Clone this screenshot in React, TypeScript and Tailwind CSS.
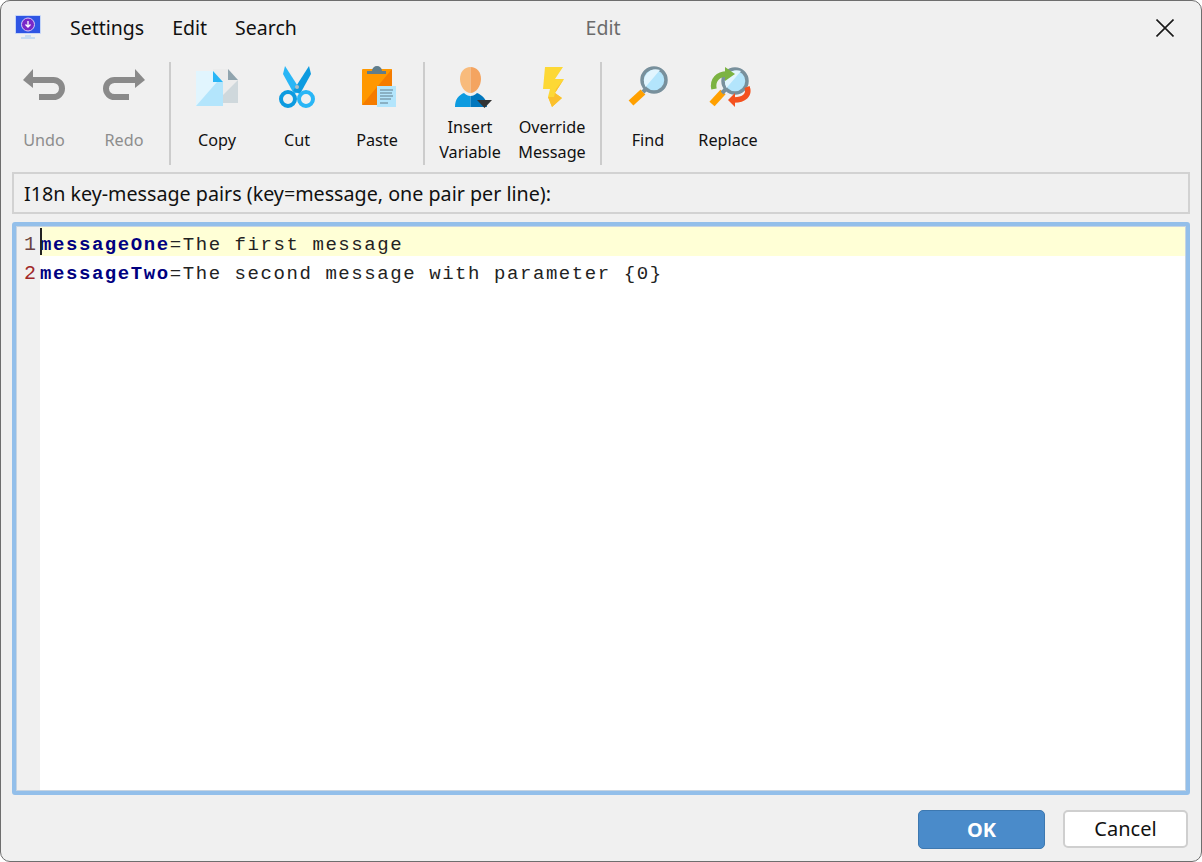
const Frame = ({ children }: { children: React.ReactNode }) => (
  <svg width="48" height="48" viewBox="0 0 48 48" fill="none">
    {children}
  </svg>
);

const UndoIcon = () => (
  <Frame>
    <path d="M12 18H33.5a8.5 8.5 0 0 1 0 17H19" stroke="#8a8a8a" strokeWidth="6" />
    <path d="M3 18L13 7V26Z" fill="#8a8a8a" />
  </Frame>
);

const RedoIcon = () => (
  <Frame>
    <path d="M36 18H14.5a8.5 8.5 0 0 0 0 17H29" stroke="#8a8a8a" strokeWidth="6" />
    <path d="M45 18L35 7V26Z" fill="#8a8a8a" />
  </Frame>
);

const CopyIcon = () => (
  <Frame>
    <path d="M20 7H35L45 18V41H20Z" fill="#ececec" />
    <path d="M45 18V41H22Z" fill="#cfd8dc" />
    <path d="M35 7L45 18H35Z" fill="#90a4ae" />
    <path d="M3 9H20L30 20V44H3Z" fill="#e1f5fe" />
    <path d="M30 20V44H3L24 20Z" fill="#b3e5fc" />
    <path d="M20 9L30 20H20Z" fill="#29b6f6" />
  </Frame>
);

const CutIcon = () => (
  <Frame>
    <path d="M12 4L28 29L21 32L10 12Z" fill="#29b6f6" />
    <path d="M36 4L20 29L27 32L38 12Z" fill="#0d9be0" />
    <circle cx="15" cy="37" r="7" stroke="#0d9be0" strokeWidth="4" />
    <circle cx="33" cy="37" r="7" stroke="#29b6f6" strokeWidth="4" />
    <circle cx="24" cy="25" r="2" fill="#b0bec5" />
  </Frame>
);

const PasteIcon = () => (
  <Frame>
    <rect x="9" y="7" width="30" height="36" rx="1" fill="#ff9800" />
    <path d="M39 7V43H9Z" fill="#f57c00" />
    <path d="M14 12V9H19a5 5 0 0 1 10 0H33V12Z" fill="#607d8b" />
    <rect x="24" y="24" width="19" height="21" fill="#b3e5fc" />
    <path d="M27 28H40M27 31H39M27 34H40M27 37H38M27 41H35" stroke="#607d8b" strokeWidth="1" />
  </Frame>
);

const PersonIcon = () => (
  <Frame>
    <path d="M24.500 5C18 5 14 10 14 17C14 24 19 31 24.500 31Z" fill="#f8bb7c" />
    <path d="M24.500 5C31 5 35 10 35 17C35 24 30 31 24.500 31Z" fill="#f4a460" />
    <path d="M18 31C13 33 9 37 9 45H24.500V34C22 34 20 33 18 31Z" fill="#0d9be0" />
    <path d="M31 31C36 33 41 37 41 45H24.500V34C27 34 29 33 31 31Z" fill="#0277bd" />
    <path d="M31 38H46L38.500 46Z" fill="#333333" />
  </Frame>
);

const BoltIcon = () => (
  <Frame>
    <path d="M17 5H35L27 17H36L27 31L34 36L24 45L20 35L22 27H15Z" fill="#fdd835" />
    <path d="M36 17L27 31L34 36L24 45L20 35H26L28 27Z" fill="#fbc02d" />
  </Frame>
);

const FindIcon = () => (
  <Frame>
    <path d="M19 30L7 41" stroke="#ffa000" strokeWidth="7" />
    <path d="M23 26L19 30" stroke="#78909c" strokeWidth="4" />
    <circle cx="30" cy="18" r="12" fill="#b3e5fc" stroke="#78909c" strokeWidth="3.500" />
    <path d="M21.500 25A12 12 0 0 1 36 8Z" fill="#e1f5fe" />
  </Frame>
);

const ReplaceIcon = () => (
  <Frame>
    <path d="M19 30L8 42" stroke="#ffa000" strokeWidth="7" />
    <path d="M22 27L18 31" stroke="#78909c" strokeWidth="4" />
    <circle cx="31" cy="19" r="12" fill="#b3e5fc" stroke="#78909c" strokeWidth="3.500" />
    <path d="M22.500 26A12 12 0 0 1 37 9Z" fill="#e1f5fe" />
    <path d="M10 27C8 18 14 12 23 12" stroke="#7cb342" strokeWidth="5.500" />
    <path d="M21 5L31 12L21 19Z" fill="#7cb342" />
    <path d="M43 25C46 33 40 38 30 38" stroke="#f4511e" strokeWidth="5.500" />
    <path d="M31 31L24 38L31 45Z" fill="#f4511e" />
  </Frame>
);

const AppIcon = () => (
  <svg width="28" height="28" viewBox="0 0 28 28" fill="none">
    <rect x="1" y="1" width="26" height="19" rx="1" fill="#c3d4f8" />
    <rect x="2" y="2" width="24" height="17" fill="#2f55e4" />
    <path d="M11 21H17V23H21V25H7V23H11Z" fill="#c6dcf2" />
    <circle cx="14" cy="10.500" r="6.500" fill="#7a28c8" stroke="#d9c8f5" strokeWidth="1" />
    <path d="M14 7V13M11.500 10.500L14 13L16.500 10.500" stroke="#ffffff" strokeWidth="1.300" />
  </svg>
);

const ToolButton = ({
  label,
  disabled,
  className,
  children,
}: {
  label: React.ReactNode;
  disabled?: boolean;
  className?: string;
  children: React.ReactNode;
}) => (
  <div className={`w-20 flex flex-col items-center ${className ?? ""}`}>
    {children}
    <div
      className={`h-[50px] mt-[5px] flex items-center text-center text-[16.2px] leading-[25px] ${disabled ? "text-[#8d8d8d]" : "text-[#111]"}`}
    >
      <span>{label}</span>
    </div>
  </div>
);

const Divider = () => <div className="w-[2px] h-[103px] bg-[#cccccc]"></div>;

export default function App() {
  return (
    <div className="w-[1202px] h-[862px] bg-white font-['Noto_Sans',sans-serif]">
      <div className="w-full h-full rounded-[10px] border border-[#6e6e6e] bg-[#f0f0f0] flex flex-col overflow-hidden">
        {/* title bar */}
        <div className="h-[53px] grid grid-cols-[1fr_auto_1fr] items-center pl-[13px] pr-[9px] pt-[1px]">
          <div className="flex items-center text-[19.5px] text-[#111]">
            <AppIcon />
            <div className="ml-[28px] flex gap-[28px]">
              <span>Settings</span>
              <span>Edit</span>
              <span>Search</span>
            </div>
          </div>
          <div className="text-[19.5px] text-[#6b6b6b]">Edit</div>
          <div className="flex justify-end mr-[18px]">
            <svg width="18" height="18" viewBox="0 0 18 18" fill="none">
              <path d="M0.500 0.500L17.500 17.500M17.500 0.500L0.500 17.500" stroke="#1a1a1a" strokeWidth="1.600" />
            </svg>
          </div>
        </div>

        {/* toolbar */}
        <div className="h-[111px] flex items-start pl-[3px] pt-[8px]">
          <ToolButton label="Undo" disabled><UndoIcon /></ToolButton>
          <ToolButton label="Redo" disabled><RedoIcon /></ToolButton>
          <div className="ml-[5px] mr-[6px]"><Divider /></div>
          <ToolButton label="Copy"><CopyIcon /></ToolButton>
          <ToolButton label="Cut"><CutIcon /></ToolButton>
          <ToolButton label="Paste"><PasteIcon /></ToolButton>
          <div className="ml-[6px] mr-[5px]"><Divider /></div>
          <ToolButton label={<>Insert<br />Variable</>}><PersonIcon /></ToolButton>
          <ToolButton label={<>Override<br />Message</>} className="ml-[2px]"><BoltIcon /></ToolButton>
          <div className="ml-[8px] mr-[6px]"><Divider /></div>
          <ToolButton label="Find"><FindIcon /></ToolButton>
          <ToolButton label="Replace"><ReplaceIcon /></ToolButton>
        </div>

        {/* label */}
        <div className="mt-[7px] mx-[11px] h-[42px] border-2 border-[#d2d2d2] flex items-center pl-[10px] pt-[1px] text-[19.7px] text-[#111]">
          I18n key-message pairs (key=message, one pair per line):
        </div>

        {/* editor */}
        <div className="mt-[8px] mx-[11px] h-[573px] rounded-[3px] border-4 border-[#93bfea] bg-white overflow-hidden">
          <div className="h-full flex border border-[#c6d4e2]">
            <div className="w-[23px] bg-[#f0f0f0] font-['Liberation_Mono',monospace] text-[20px] text-right pr-[4px]">
              <div className="h-[29px] leading-[36px] text-[#6b4444]">1</div>
              <div className="h-[29px] leading-[36px] text-[#a02828]">2</div>
            </div>
            <div className="flex-1 font-['Liberation_Mono',monospace] text-[19px] tracking-[1.57px] text-[#222]">
              <div className="relative bg-[#ffffd6] h-[29px] leading-[36px]">
                <span className="absolute left-0 top-[1px] w-[2px] h-[27px] bg-[#222]"></span>
                <b className="text-[#000080]">messageOne</b>=The first message
              </div>
              <div className="h-[29px] leading-[36px]">
                <b className="text-[#000080]">messageTwo</b>=The second message with parameter {"{0}"}
              </div>
            </div>
          </div>
        </div>

        {/* footer */}
        <div className="flex justify-end items-start gap-[18px] mt-[15px] pr-[13px] text-[20px]">
          <button className="w-[127px] h-[39px] rounded-[5px] border border-[#3d78b0] bg-[#4a8bca] text-white font-bold">OK</button>
          <button className="w-[125px] h-[38px] rounded-[5px] border-2 border-[#cfcfcf] bg-white text-[#111]">Cancel</button>
        </div>
      </div>
    </div>
  );
}
